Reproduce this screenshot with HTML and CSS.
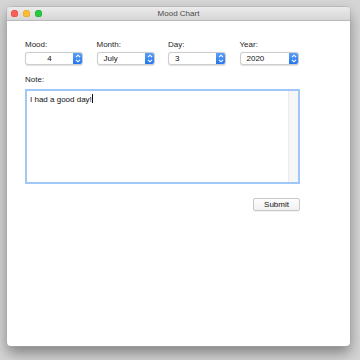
FILE: index.html
```html
<!DOCTYPE html>
<html>
<head>
<meta charset="utf-8">
<link rel="stylesheet" href="styles.css">
</head>
<body>
<div class="window">
  <div class="titlebar">
    <div class="lights">
      <span class="light red"></span>
      <span class="light yellow"></span>
      <span class="light green"></span>
    </div>
    <div class="title">Mood Chart</div>
  </div>
  <div class="content">
    <div class="fields">
      <div class="field">
        <div class="label">Mood:</div>
        <div class="select"><span class="value center">4</span><span class="stepper"><svg viewBox="0 0 10 13" width="10" height="13"><path d="M3 5.2 L5 3.2 L7 5.2 M3 7.8 L5 9.8 L7 7.8" fill="none" stroke="#fff" stroke-width="1.1"/></svg></span></div>
      </div>
      <div class="field">
        <div class="label">Month:</div>
        <div class="select"><span class="value">July</span><span class="stepper"><svg viewBox="0 0 10 13" width="10" height="13"><path d="M3 5.2 L5 3.2 L7 5.2 M3 7.8 L5 9.8 L7 7.8" fill="none" stroke="#fff" stroke-width="1.1"/></svg></span></div>
      </div>
      <div class="field">
        <div class="label">Day:</div>
        <div class="select"><span class="value">3</span><span class="stepper"><svg viewBox="0 0 10 13" width="10" height="13"><path d="M3 5.2 L5 3.2 L7 5.2 M3 7.8 L5 9.8 L7 7.8" fill="none" stroke="#fff" stroke-width="1.1"/></svg></span></div>
      </div>
      <div class="field">
        <div class="label">Year:</div>
        <div class="select"><span class="value">2020</span><span class="stepper"><svg viewBox="0 0 10 13" width="10" height="13"><path d="M3 5.2 L5 3.2 L7 5.2 M3 7.8 L5 9.8 L7 7.8" fill="none" stroke="#fff" stroke-width="1.1"/></svg></span></div>
      </div>
    </div>
    <div class="label note-label">Note:</div>
    <div class="note">
      <div class="note-text">I had a good day!<span class="caret"></span></div>
      <div class="scrolltrack"></div>
    </div>
    <div class="actions">
      <div class="button">Submit</div>
    </div>
  </div>
</div>
</body>
</html>
```
FILE: styles.css
```css
html, body {
  margin: 0;
  padding: 0;
}
body {
  width: 360px;
  height: 360px;
  background: #d5d5d5;
  font-family: "Liberation Sans", Arial, sans-serif;
  font-size: 8px;
  color: #1e1e1e;
  padding: 7px 0 0 7px;
  box-sizing: border-box;
}
.window {
  width: 343px;
  height: 339px;
  background: #fff;
  border-radius: 4px;
  box-shadow: 0 0 0 0.5px #a9a9a9, 0 7px 14px rgba(0,0,0,0.4);
  overflow: hidden;
  display: flex;
  flex-direction: column;
}
.titlebar {
  height: 13px;
  background: linear-gradient(#ebebeb, #d6d6d6);
  border-bottom: 1px solid #b9b9b9;
  position: relative;
  display: flex;
  align-items: center;
  justify-content: center;
  flex-shrink: 0;
}
.lights {
  position: absolute;
  left: 4px;
  top: 3px;
  display: flex;
  gap: 5px;
}
.light {
  width: 7px;
  height: 7px;
  border-radius: 50%;
  display: block;
}
.red { background: #fc5f57; box-shadow: inset 0 0 0 0.5px #df4744; }
.yellow { background: #fdbc2e; box-shadow: inset 0 0 0 0.5px #dea123; }
.green { background: #28c840; box-shadow: inset 0 0 0 0.5px #1aab29; }
.title {
  color: #4a4a4a;
  font-size: 8px;
  line-height: 13px;
}
.content {
  padding: 19px 0 0 18px;
}
.fields {
  display: grid;
  grid-template-columns: 58px 58px 58px 59px;
  column-gap: 13.5px;
}
.label {
  line-height: 10px;
  height: 10px;
}
.field .label {
  margin-bottom: 2px;
}
.select {
  height: 13px;
  box-sizing: border-box;
  border: 1px solid #cdcdcd;
  border-radius: 3px;
  background: #fff;
  box-shadow: 0 0.5px 1px rgba(0,0,0,0.12);
  display: flex;
  align-items: stretch;
  overflow: hidden;
}
.value {
  flex: 1;
  line-height: 11px;
  padding-left: 6px;
  color: #111;
}
.value.center {
  text-align: center;
  padding-left: 0;
}
.stepper {
  width: 10px;
  background: linear-gradient(#5ea2f9, #1f72ee);
  display: flex;
  align-items: center;
  justify-content: center;
  margin: -1px -1px -1px 0;
  border-radius: 0 3px 3px 0;
}
.stepper svg {
  display: block;
}
.note-label {
  margin-top: 10px;
  margin-bottom: 4px;
}
.note {
  width: 275px;
  height: 95px;
  box-sizing: border-box;
  border: 2px solid #9fc7f8;
  display: flex;
  background: #fff;
}
.note-text {
  flex: 1;
  padding: 3px 0 0 3px;
  line-height: 10px;
  color: #111;
}
.caret {
  display: inline-block;
  width: 1px;
  height: 9px;
  background: #111;
  vertical-align: -1px;
  margin-left: 0;
}
.scrolltrack {
  width: 9px;
  background: #f6f6f6;
  border-left: 1px solid #ececec;
}
.actions {
  width: 275px;
  display: flex;
  justify-content: flex-end;
  margin-top: 14px;
}
.button {
  width: 47px;
  height: 13px;
  box-sizing: border-box;
  border: 1px solid #c8c8c8;
  border-radius: 2px;
  background: linear-gradient(#fdfdfd, #f1f1f1);
  text-align: center;
  line-height: 11px;
  color: #111;
  box-shadow: 0 0.5px 0.5px rgba(0,0,0,0.1);
}
```
